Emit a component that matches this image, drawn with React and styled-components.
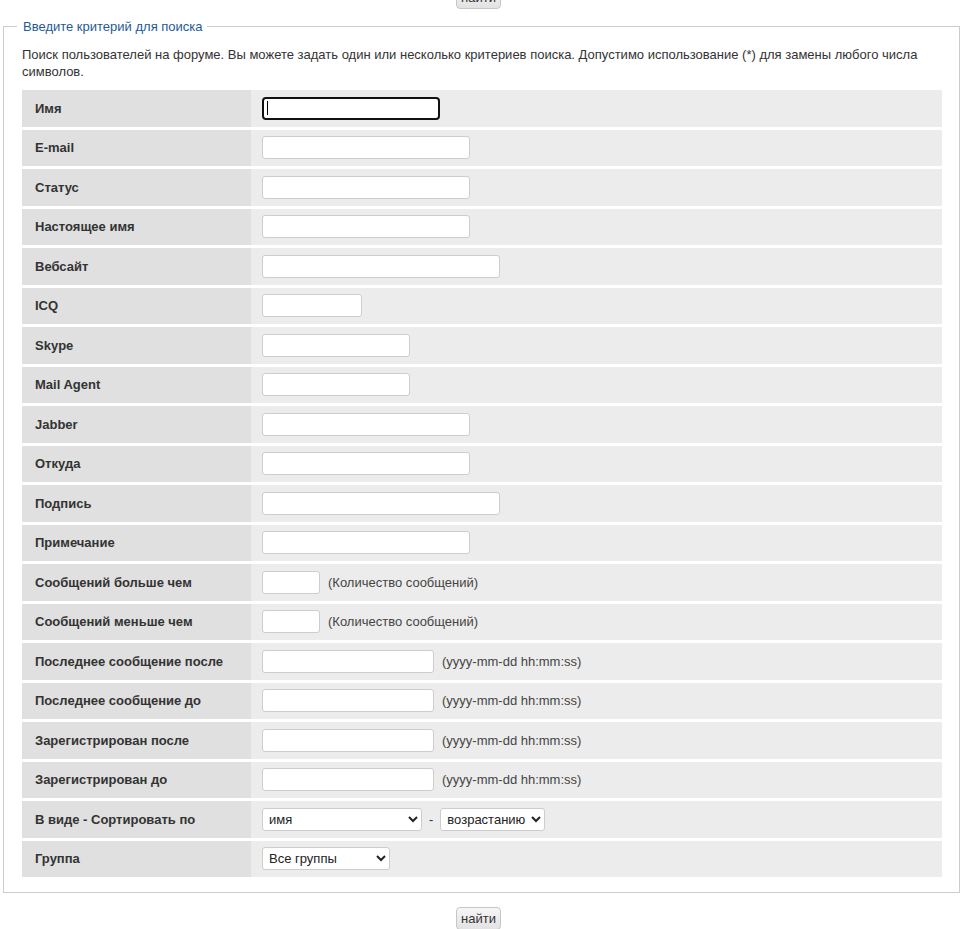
import React from "react";
import styled, { createGlobalStyle } from "styled-components";

const FONT = `"Liberation Sans", Arial, sans-serif`;

const Global = createGlobalStyle`
  html, body { margin: 0; padding: 0; background: #fff; }
  body { font-family: ${FONT}; font-size: 13px; color: #333; overflow: hidden; }
`;

const Page = styled.div`
  width: 957px;
  margin-left: 3px;
  display: flex;
  flex-direction: column;
`;

const ButtonBar = styled.div`
  display: flex;
  justify-content: center;
  padding-right: 6px;
  margin-top: ${(p) => p.$top || "0px"};
  margin-bottom: ${(p) => p.$bottom || "0px"};
`;

const Button = styled.button`
  height: 23px;
  width: 45px;
  padding: 0;
  font-family: ${FONT};
  font-size: 13px;
  color: #333;
  background: linear-gradient(#f6f6f6, #e2e2e2);
  border: 1px solid #c6c6c6;
  border-radius: 4px;
`;

const Fieldset = styled.fieldset`
  margin: 0;
  border: 1px solid #cccccc;
  padding: 0 17px 15px 18px;
  min-width: 0;
`;

const Legend = styled.legend`
  color: #1e5b98;
  font-size: 13px;
  padding: 0 4px 0 6px;
  margin-left: -5px;
  line-height: 15px;
`;

const Intro = styled.p`
  margin: 12px 0 10px 0;
  line-height: 17px;
`;

const Grid = styled.div`
  display: grid;
  grid-template-columns: 229px 1fr;
  row-gap: 3px;
`;

const Label = styled.div`
  background: #dfe0df;
  font-weight: bold;
  padding: 0 13px;
  height: 36.5px;
  display: flex;
  align-items: center;
`;

const Value = styled.div`
  background: #ececec;
  padding: 0 11px;
  display: flex;
  align-items: center;
  gap: 8px;
`;

const Input = styled.input`
  box-sizing: border-box;
  width: ${(p) => p.$w}px;
  height: 23px;
  background: #fff;
  border: 1px solid #cdcdcd;
  border-radius: 3px;
  padding: 0 4px;
  font-family: ${FONT};
  font-size: 13px;
  outline: none;
  ${(p) =>
    p.$active &&
    `border: 2px solid #111;
     border-radius: 4px;
     background: #fff linear-gradient(#000, #000) no-repeat 3px center / 1px 14px;`}
`;

const Select = styled.select`
  box-sizing: border-box;
  width: ${(p) => p.$w}px;
  height: 23px;
  background: #fff;
  border: 1px solid #cdcdcd;
  border-radius: 3px;
  padding: 0 2px;
  font-family: ${FONT};
  font-size: 13px;
  color: #222;
`;

const Hint = styled.span`
  color: #444;
`;

const Dash = styled.span`
  margin: 0 -1px;
`;

const rows = [
  ["Имя", 178, null, true],
  ["E-mail", 208],
  ["Статус", 208],
  ["Настоящее имя", 208],
  ["Вебсайт", 238],
  ["ICQ", 100],
  ["Skype", 148],
  ["Mail Agent", 148],
  ["Jabber", 208],
  ["Откуда", 208],
  ["Подпись", 238],
  ["Примечание", 208],
  ["Сообщений больше чем", 58, "(Количество сообщений)"],
  ["Сообщений меньше чем", 58, "(Количество сообщений)"],
  ["Последнее сообщение после", 172, "(yyyy-mm-dd hh:mm:ss)"],
  ["Последнее сообщение до", 172, "(yyyy-mm-dd hh:mm:ss)"],
  ["Зарегистрирован после", 172, "(yyyy-mm-dd hh:mm:ss)"],
  ["Зарегистрирован до", 172, "(yyyy-mm-dd hh:mm:ss)"],
];

export default function App() {
  return (
    <>
      <Global />
      <Page>
        <ButtonBar $top="-14px" $bottom="10px">
          <Button>найти</Button>
        </ButtonBar>
        <Fieldset>
          <Legend>Введите критерий для поиска</Legend>
          <Intro>
            Поиск пользователей на форуме. Вы можете задать один или несколько критериев поиска. Допустимо
            использование (*) для замены любого числа символов.
          </Intro>
          <Grid>
            {rows.map(([label, w, hint, active]) => (
              <React.Fragment key={label}>
                <Label>{label}</Label>
                <Value>
                  <Input $w={w} $active={active} />
                  {hint && <Hint>{hint}</Hint>}
                </Value>
              </React.Fragment>
            ))}
            <Label>В виде - Сортировать по</Label>
            <Value>
              <Select $w={160} defaultValue="name">
                <option value="name">имя</option>
              </Select>
              <Dash>-</Dash>
              <Select $w={105} defaultValue="asc">
                <option value="asc">возрастанию</option>
              </Select>
            </Value>
            <Label>Группа</Label>
            <Value>
              <Select $w={128} defaultValue="all">
                <option value="all">Все группы</option>
              </Select>
            </Value>
          </Grid>
        </Fieldset>
        <ButtonBar $top="14px">
          <Button>найти</Button>
        </ButtonBar>
      </Page>
    </>
  );
}
